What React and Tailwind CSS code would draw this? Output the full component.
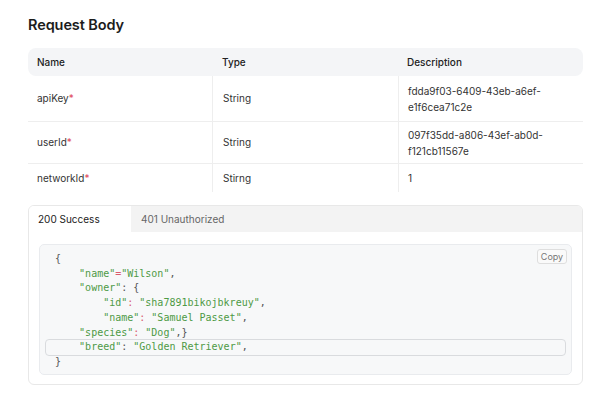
import React from 'react';

const rows = [
    { name: 'apiKey', type: 'String', desc: ['fdda9f03-6409-43eb-a6ef-', 'e1f6cea71c2e'], h: 'h-[46px]' },
    { name: 'userId', type: 'String', desc: ['097f35dd-a806-43ef-ab0d-', 'f121cb11567e'], h: 'h-[42px]' },
    { name: 'networkId', type: 'Stirng', desc: ['1'], h: 'h-[28px]' },
];

const S = ({ children }) => <span className="text-[#4e9a45]">{children}</span>;
const P = ({ children }) => <span className="text-[#d95c6e]">{children}</span>;
const D = ({ children }) => <span className="text-[#555]">{children}</span>;

export default function App() {
    return (
        <div className="w-full h-[398px] bg-white px-[28px] pt-[15px] overflow-hidden" style={{ fontFamily: 'Inter, "Noto Sans", sans-serif' }}>
            <h2 className="text-[14.5px] leading-[20px] font-semibold text-[#1c1c1c] tracking-[-0.1px]">Request Body</h2>

            {/* Table */}
            <div className="mt-[13px] w-[555px]">
                <div className="grid grid-cols-[184px_186px_1fr] h-[28px] items-center rounded-[8px] bg-[#f4f5f7] text-[10px] font-medium text-[#222]">
                    <div className="pl-[9px]">Name</div>
                    <div className="pl-[10px]">Type</div>
                    <div className="pl-[9px]">Description</div>
                </div>
                {rows.map((r, i) => (
                    <div key={r.name} className={`grid grid-cols-[184px_186px_1fr] ${r.h} text-[10px] text-[#333] ${i < rows.length - 1 ? 'border-b border-[#eeeeee]' : ''}`}>
                        <div className="pl-[9px] flex items-center">
                            {r.name}<span className="text-[#e0475b]">*</span>
                        </div>
                        <div className="pl-[10px] flex items-center border-l border-[#eeeeee]">{r.type}</div>
                        <div className="pl-[9px] flex flex-col justify-center border-l border-[#eeeeee] leading-[16px]">
                            {r.desc.map((d) => <div key={d}>{d}</div>)}
                        </div>
                    </div>
                ))}
            </div>

            {/* Responses */}
            <div className="mt-[13px] w-[555px] h-[180px] border border-[#e8e8e8] rounded-[6px] overflow-hidden">
                <div className="flex h-[26px] text-[10px]">
                    <div className="w-[102px] bg-white flex items-center pl-[9px] text-[#222]">200 Success</div>
                    <div className="flex-1 bg-[#f3f3f3] flex items-center pl-[10px] text-[#666]">401 Unauthorized</div>
                </div>
                <div className="relative mx-[10px] mt-[12px] h-[131px] bg-[#f7f8f9] border border-[#e9ebee] rounded-[5px] px-[5px] pt-[7px] text-[10px] leading-[14.7px] whitespace-pre" style={{ fontFamily: '"DejaVu Sans Mono", "Liberation Mono", monospace' }}>
                    <button className="absolute top-[4px] right-[4px] w-[30px] h-[15px] border border-[#dedede] rounded-[3px] bg-[#fafafa] text-[9px] leading-[13px] text-[#777]" style={{ fontFamily: 'Inter, sans-serif' }}>Copy</button>
                    <div className="px-[10px]"><D>{'{'}</D></div>
                    <div className="px-[10px]">{'    '}<S>"name"</S><P>=</P><S>"Wilson"</S><D>,</D></div>
                    <div className="px-[10px]">{'    '}<S>"owner"</S><D>: {'{'}</D></div>
                    <div className="px-[10px]">{'        '}<S>"id"</S><P>: </P><S>"sha7891bikojbkreuy"</S><D>,</D></div>
                    <div className="px-[10px]">{'        '}<S>"name"</S><P>: </P><S>"Samuel Passet"</S><D>,</D></div>
                    <div className="px-[10px]">{'    '}<S>"species"</S><P>: </P><S>"Dog"</S><D>,{'}'}</D></div>
                    <div className="px-[9px] border border-[#d9dbde] rounded-[4px] -my-px">{'    '}<S>"breed"</S><D>: </D><S>"Golden Retriever"</S><D>,</D></div>
                    <div className="px-[10px]"><D>{'}'}</D></div>
                </div>
            </div>
        </div>
    );
}
